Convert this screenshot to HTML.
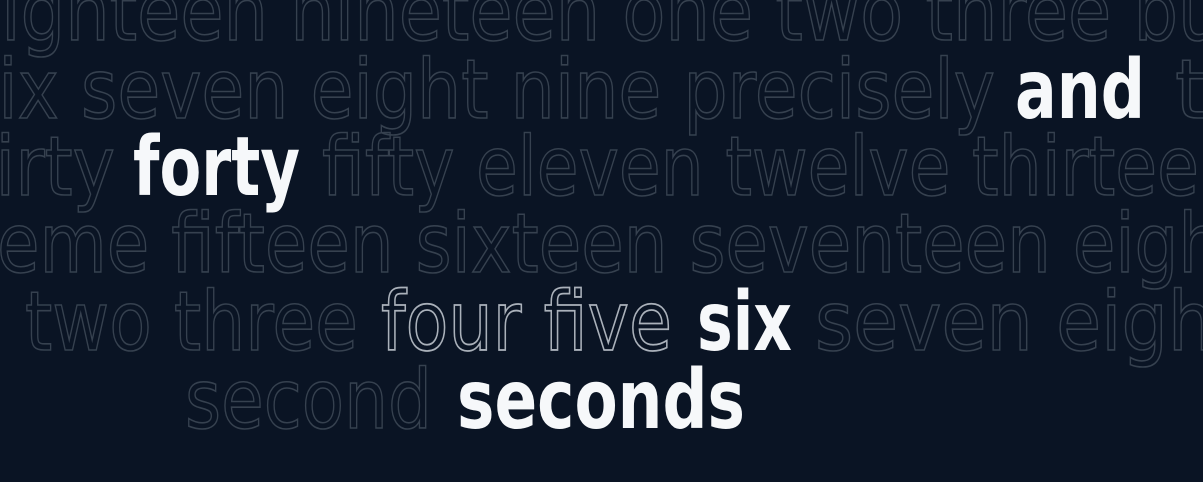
<!DOCTYPE html>
<html><head><style>
html,body{margin:0;padding:0;background:#0a1424;overflow:hidden}
svg{display:block}
text{font-family:"DejaVu Sans","Liberation Sans",sans-serif;font-size:82px}
.o{fill:none;stroke:#36414f;stroke-width:1.6}
.b{fill:none;stroke:#aab1ba;stroke-width:1.8}
.w{fill:#f6f8fa;font-weight:bold}
</style></head><body>
<svg width="1203" height="482" viewBox="0 0 1203 482" xmlns="http://www.w3.org/2000/svg">
<rect width="1203" height="482" fill="#0a1424"/>
<text class="o" x="-42" y="40" textLength="1292" lengthAdjust="spacingAndGlyphs">eighteen nineteen one two three but</text>
<text class="o" x="-38" y="118" textLength="1033" lengthAdjust="spacingAndGlyphs">six seven eight nine precisely</text>
<text class="w" x="1015" y="118" textLength="130" lengthAdjust="spacingAndGlyphs">and</text>
<text class="o" x="1175" y="118">two</text>
<text class="o" x="-78" y="195" textLength="193" lengthAdjust="spacingAndGlyphs">thirty</text>
<text class="w" x="133" y="195" textLength="167" lengthAdjust="spacingAndGlyphs">forty</text>
<text class="o" x="322" y="195" textLength="920" lengthAdjust="spacingAndGlyphs">fifty eleven twelve thirteen</text>
<text class="o" x="-3" y="272" textLength="1381" lengthAdjust="spacingAndGlyphs">eme fifteen sixteen seventeen eighteen</text>
<text class="o" x="25" y="350" textLength="333" lengthAdjust="spacingAndGlyphs">two three</text>
<text class="b" x="381" y="350" textLength="291" lengthAdjust="spacingAndGlyphs">four five</text>
<text class="w" x="697" y="350" textLength="95" lengthAdjust="spacingAndGlyphs">six</text>
<text class="o" x="815" y="350" textLength="428" lengthAdjust="spacingAndGlyphs">seven eight</text>
<text class="o" x="185" y="428" textLength="247" lengthAdjust="spacingAndGlyphs">second</text>
<text class="w" x="457" y="428" textLength="288" lengthAdjust="spacingAndGlyphs">seconds</text>
</svg>
</body></html>
